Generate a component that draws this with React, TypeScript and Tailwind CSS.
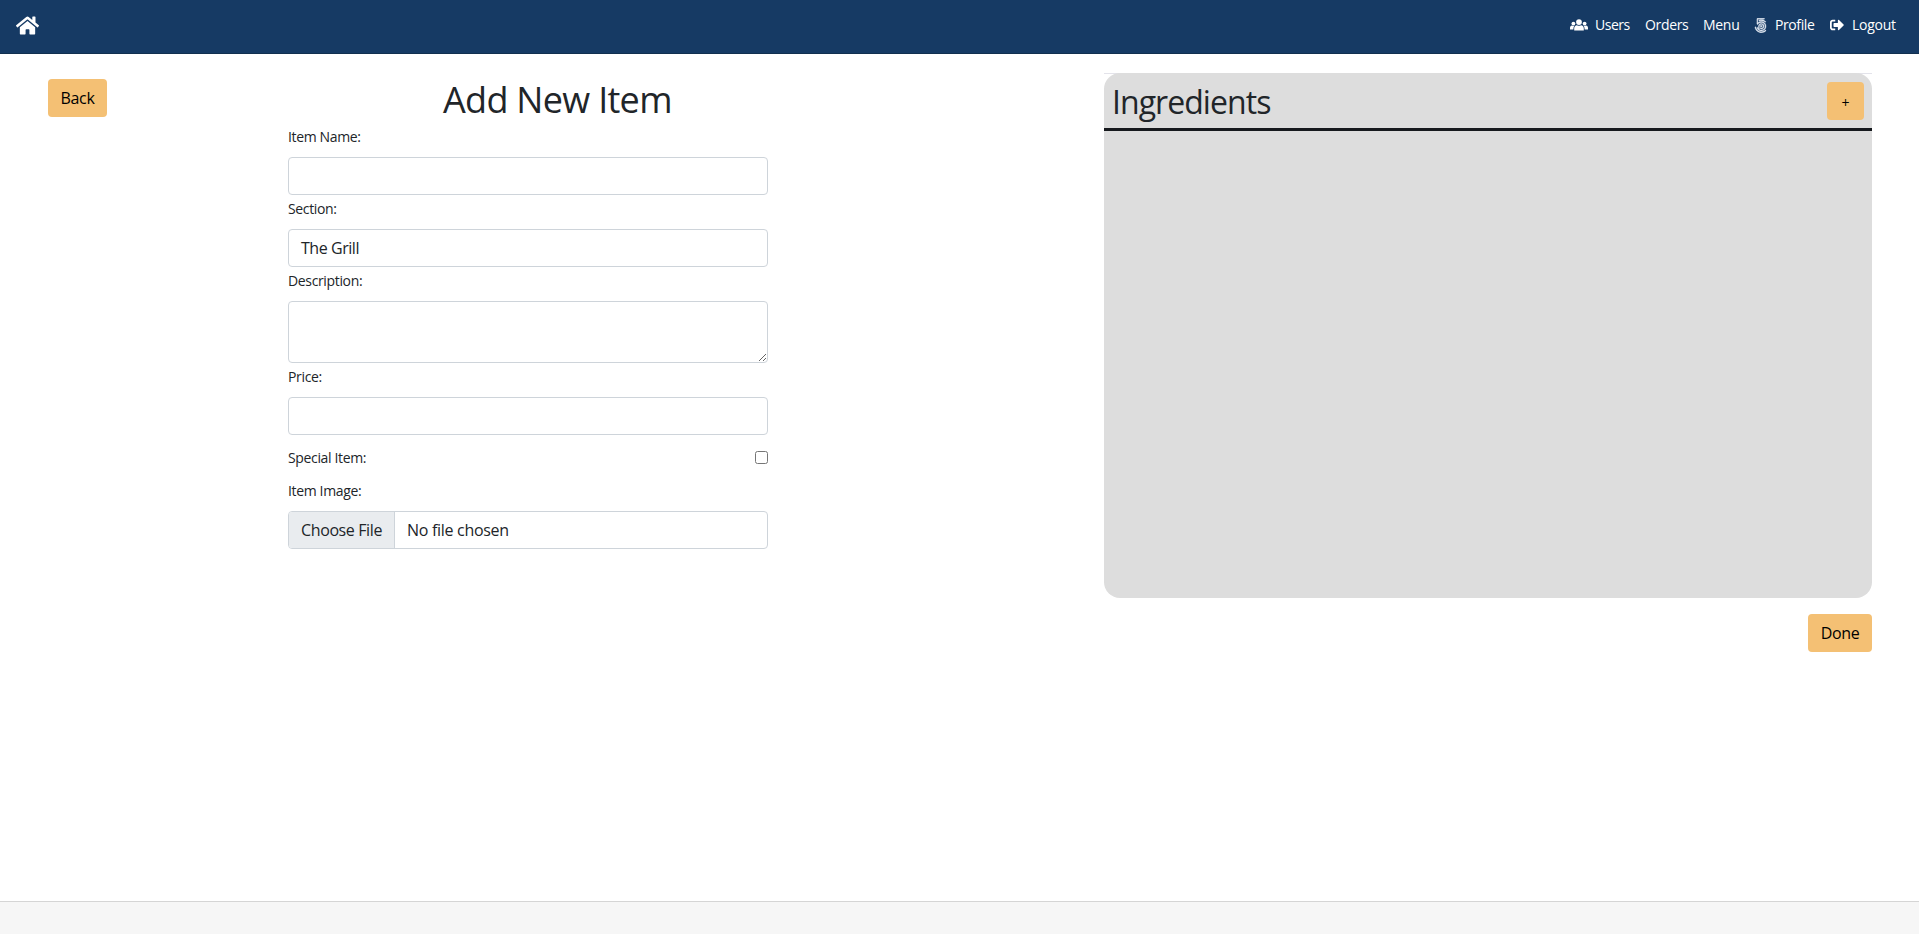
import type { ReactNode } from "react";
import { Fa500Px, FaHome, FaSignOutAlt } from "react-icons/fa";

const control =
  "block w-full rounded-[4px] border border-[#ced4da] bg-white px-3 text-[16px] text-[#212529] outline-none";
const button =
  "flex h-[38px] items-center justify-center rounded-[4px] bg-[#f4c074] text-black";

function Label({ children, htmlFor }: { children: ReactNode; htmlFor: string }) {
  return (
    <label htmlFor={htmlFor} className="mb-[7px] block h-[27px] pt-px text-[14px] leading-[26px] tracking-[-0.35px]">
      {children}
    </label>
  );
}

function PeopleIcon() {
  return (
    <svg viewBox="0 0 18 12" fill="currentColor" className="mr-[7px] h-3 w-[18px] shrink-0" aria-hidden="true">
      <circle cx="9" cy="3.1" r="2.9" />
      <path d="M4.2 11.4V9.6C4.2 7.7 5.3 6.4 7 6.3c1.2 0.7 2.8 0.7 4 0 1.7 0.1 2.8 1.4 2.8 3.3v1.8Z" />
      <circle cx="3.4" cy="4.6" r="1.9" />
      <path d="M0 10.4V9c0-1.5 0.8-2.5 2-2.5 0.9 0.5 1.9 0.5 2.7 0.1-0.9 0.8-1.3 1.9-1.3 3.8Z" />
      <circle cx="14.6" cy="4.6" r="1.9" />
      <path d="M18 10.4V9c0-1.5-0.8-2.5-2-2.5-0.9 0.5-1.9 0.5-2.7 0.1 0.9 0.8 1.3 1.9 1.3 3.8Z" />
    </svg>
  );
}

function Navbar() {
  return (
    <nav className="flex h-[54px] items-start justify-between border-b border-[#12304f] bg-[#163a64] pl-4 pr-[23px] text-[14px] text-white">
      <a href="#" aria-label="Home" className="mt-[14px]">
        <FaHome className="h-[23px] w-[23px]" />
      </a>
      <div className="mt-[13px] flex h-6 items-center font-medium leading-6">
        <a href="#" className="flex w-[75px] items-center">
          <PeopleIcon />
          <span className="tracking-[-0.5px]">Users</span>
        </a>
        <a href="#" className="w-[58px] tracking-[-0.35px]">Orders</a>
        <a href="#" className="w-[51px] tracking-[-0.3px]">Menu</a>
        <a href="#" className="flex w-[76px] items-center">
          <Fa500Px className="mr-2 h-[15px] w-[13px] text-[#e2e8f2]" stroke="currentColor" strokeWidth={14} />
          <span className="tracking-[-0.4px]">Profile</span>
        </a>
        <a href="#" className="flex w-[66px] items-center">
          <FaSignOutAlt className="mr-2 h-[14px] w-[14px]" />
          <span className="tracking-[-0.25px]">Logout</span>
        </a>
      </div>
    </nav>
  );
}

function ItemForm() {
  return (
    <form className="w-[480px]">
      <h1 className="ml-[155px] h-[50px] whitespace-nowrap pt-[3px] text-[36px] leading-[47px] tracking-[-0.7px]">
        Add New Item
      </h1>
      <Label htmlFor="name">Item Name:</Label>
      <input id="name" className={`${control} h-[38px]`} />
      <Label htmlFor="section">Section:</Label>
      <button id="section" type="button" className={`${control} h-[38px] text-left tracking-[-0.45px]`}>
        The Grill
      </button>
      <Label htmlFor="description">Description:</Label>
      <textarea id="description" className={`${control} h-[62px] resize`} />
      <Label htmlFor="price">Price:</Label>
      <input id="price" className={`${control} h-[38px]`} />
      <div className="mt-[9px] flex h-[26px] items-center justify-between">
        <label htmlFor="special" className="text-[14px] tracking-[-0.35px]">Special Item:</label>
        <input id="special" type="checkbox" className="h-[13px] w-[13px]" />
      </div>
      <div className="mt-[7px]">
        <Label htmlFor="image">Item Image:</Label>
        <button
          id="image"
          type="button"
          className="flex h-[38px] w-full items-stretch overflow-hidden rounded-[4px] border border-[#ced4da] bg-white text-[16px]"
        >
          <span className="flex w-[106px] items-center whitespace-nowrap border-r border-[#ced4da] bg-[#e9ecef] pl-3 tracking-[-0.38px]">
            Choose File
          </span>
          <span className="flex items-center pl-3 tracking-[-0.3px]">No file chosen</span>
        </button>
      </div>
    </form>
  );
}

function Ingredients() {
  return (
    <section className="flex w-[768px] flex-col items-end">
      <div className="w-full bg-[linear-gradient(#e3e3ea_1px,transparent_1px)]">
        <div className="h-[525px] rounded-[16px] bg-[#ddd]">
          <header className="flex h-[58px] items-start justify-between border-b-[3px] border-[#16191d] px-2">
            <h2 className="mt-[7px] text-[32px] leading-[43px] tracking-[-0.95px]">Ingredients</h2>
            <button type="button" className={`${button} mt-[9px] w-[37px] pt-0.5 text-[14px]`}>+</button>
          </header>
        </div>
      </div>
      <button type="button" className={`${button} mt-4 w-16 text-[16px] tracking-[-0.4px]`}>Done</button>
    </section>
  );
}

export default function App() {
  return (
    <div className="flex h-[934px] w-full flex-col overflow-hidden bg-white font-['Open_Sans','Noto_Sans',sans-serif] text-[#212529]">
      <Navbar />
      <main className="flex flex-1 items-start pl-12 pt-[19px]">
        <div className="mt-[6px] w-[240px]">
          <button type="button" className={`${button} w-[59px] text-[16px] tracking-[-0.3px]`}>Back</button>
        </div>
        <div className="w-[816px]">
          <ItemForm />
        </div>
        <Ingredients />
      </main>
      <footer className="h-[33px] border-t border-[#d5d5d5] bg-[#f6f6f6]" />
    </div>
  );
}
